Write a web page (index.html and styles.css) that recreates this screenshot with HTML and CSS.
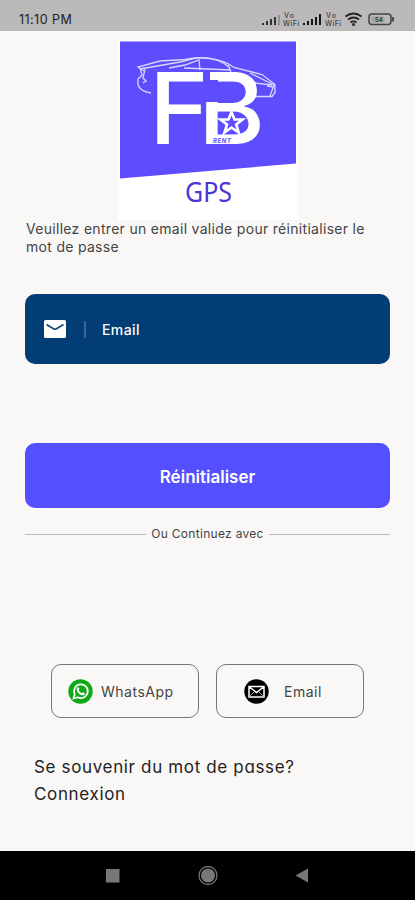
FILE: index.html
```
<!DOCTYPE html>
<html lang="fr">
<head>
    <meta charset="UTF-8">
    <meta name="viewport" content="width=device-width, initial-scale=1">
    <title>Réinitialiser le mot de passe</title>
    <link rel="stylesheet" href="styles.css">
</head>
<body>
    <header class="status-bar">
        <span class="time">11:10 PM</span>
        <svg class="status-icons" width="136" height="20" viewBox="260 9 136 20">
            <g stroke="#333" stroke-width="2">
                <path d="M263 25v-2M267 25v-4M271 25v-6M275 25v-8"/>
                <path d="M279 25v-10" stroke="#929090"/>
                <path d="M304 25v-2M308 25v-4M312 25v-6M316 25v-8M320 25v-11" stroke="#151515"/>
            </g>
            <g class="vowifi">
                <text x="284" y="17.5" textLength="10">Vo</text>
                <text x="283" y="26" textLength="16">WiFi</text>
                <text x="326" y="17.5" textLength="10">Vo</text>
                <text x="325" y="26" textLength="16">WiFi</text>
            </g>
            <g fill="none" stroke="#222" stroke-width="1.8">
                <path d="M345.500 16.500q8-6 16 0M348 19.500q5.500-4 11 0M350.500 22.500q3-2.300 6 0"/>
                <circle cx="353.500" cy="24.500" r=".6"/>
                <rect x="369" y="14" width="22" height="10.500" rx="3" stroke="#444" stroke-width="1.500"/>
                <path d="M393 17v4.500" stroke="#444"/>
            </g>
            <rect x="371.500" y="16.500" width="13" height="6" rx="1" fill="#a5a3a3"/>
            <text class="battery" x="375" y="22">54</text>
        </svg>
    </header>

    <main class="screen">
        <svg class="logo" width="180" height="180" viewBox="118 40 180 180">
            <path d="M118 40h180v180H118z" fill="#fff"/>
            <path d="M120 41.500h176v122L120 178.500z" fill="#5d4dff"/>
            <g class="car">
                <path d="M144 71l-6-4 22-6 25-1.500c18-4 37-1 49 8l28 7 13 10v8l-3 4h-17V83l17 2"/>
                <path d="M140 68l2 7-4 4c-1 8 2 12 13 14M145 69l-2 9 3 3-3 2"/>
                <path d="M140 69l40-7 16-4c14-1 26 2 34 10M169 68l16-3 14-5 1 10M184 68l47 2M228 65l3 7M250 73l24 12-4 11M256 83l-3-2M267 86l7 1"/>
            </g>
            <text class="letters" x="149" y="144" textLength="61" lengthAdjust="spacingAndGlyphs">F</text>
            <text class="letters" x="198" y="144" textLength="67" lengthAdjust="spacingAndGlyphs">B</text>
            <path d="M203 70h7v10h8v22h-15z" fill="#5d4dff"/>
            <path d="M231.500 112l3 7.500h8l-6.300 5 2.500 8-7.200-5-7 5 2.500-8-6.500-5h8z" class="star"/>
            <text class="rent" x="213" y="142.500" textLength="18">RENT</text>
            <text class="gps" x="185" y="202" textLength="47" lengthAdjust="spacingAndGlyphs">GPS</text>
        </svg>

        <p class="intro">Veuillez entrer un email valide pour réinitialiser le mot de passe</p>

        <div class="field">
            <svg width="22" height="18" viewBox="0 0 22 18">
                <rect width="22" height="18" rx="1.500" fill="#fff"/>
                <path d="M2.500 4.500l7 4.200q1.500.8 3 0l7-4.200" fill="none" stroke="#174578" stroke-width="1.600"/>
            </svg>
            <span class="separator"></span>
            <span class="field-label">Email</span>
        </div>

        <button class="reset">Réinitialiser</button>

        <div class="divider"><span>Ou Continuez avec</span></div>

        <div class="contacts">
            <button class="contact whatsapp">
                <svg width="25" height="25" viewBox="0 0 25 25">
                    <circle cx="12.500" cy="12.500" r="12.200" fill="#10a916"/>
                    <path d="M5.500 19.500l1.200-4.200A6.900 6.900 0 1 1 9.600 18.300z" fill="none" stroke="#fff" stroke-width="1.700"/>
                    <path d="M9.300 8.800c1-1 1.500-.3 2.100 1.300.1.500-.4.900-.7 1.200.8 1.500 1.800 2.400 3.200 3 .5-.6.9-1.200 1.500-.8 1.500.7 1.800.9 1.300 1.900-.8 1.300-2.700 1.200-4.600.1-2.300-1.300-4.800-4.800-2.800-6.700z" fill="#fff"/>
                </svg>
                <span>WhatsApp</span>
            </button>
            <button class="contact mail">
                <svg width="25" height="25" viewBox="0 0 25 25">
                    <circle cx="12.500" cy="12.500" r="12.200"/>
                    <path d="M5 7.500h15v10.500H5zM5.500 8l7 5.500 7-5.500" fill="none" stroke="#fff" stroke-width="1.500"/>
                    <path d="M5.500 17.500l4.500-4.500M19.500 17.500l-4.500-4.500" stroke="#999"/>
                </svg>
                <span>Email</span>
            </button>
        </div>

        <div class="remember">
            <div class="question">Se souvenir du mot de passe?</div>
            <div class="login">Connexion</div>
        </div>
    </main>

    <nav class="nav-bar">
        <svg width="415" height="49" viewBox="0 0 415 49" fill="#777">
            <path d="M106 18h13.500v13.500H106zM308 17.500v14L295.500 24.500z"/>
            <circle cx="208" cy="24.500" r="7"/>
            <circle cx="208" cy="24.500" r="9" fill="none" stroke="#777" stroke-width="1.300"/>
        </svg>
    </nav>
</body>
</html>
```
FILE: styles.css
```
* {
    box-sizing: border-box;
}

body {
    margin: 0;
    height: 900px;
    display: flex;
    flex-direction: column;
    background-color: #f9f8f6;
    font-family: Inter, Roboto, sans-serif;
    color: #444;
    overflow: hidden;
}

.status-bar {
    height: 31px;
    padding: 9px 19px 0;
    display: flex;
    justify-content: space-between;
    background-color: #bbb9b9;
}

.time {
    font: 400 12.5px/21px Inter, sans-serif;
    letter-spacing: 0.45px;
    color: #222;
}

.vowifi {
    font: 500 7px Inter, sans-serif;
    fill: #444;
}

.battery {
    font: 600 6px Inter, sans-serif;
    fill: #333;
}

.screen {
    flex: 1;
    padding: 9px 25px 0;
    display: flex;
    flex-direction: column;
}

.logo {
    align-self: center;
    margin-left: 1px;
}

.car {
    fill: none;
    stroke: #d9d5ff;
    stroke-width: 1.3;
}

.letters {
    font: 500 99px Inter, sans-serif;
    fill: #fff;
}

.star {
    fill: #5d4dff;
    stroke: #fff;
    stroke-width: 2.6;
}

.rent {
    font: italic 700 6px Inter, sans-serif;
    fill: #5d4dff;
}

.gps {
    font: 400 27px "Noto Sans", sans-serif;
    fill: #4c35d5;
}

.intro {
    margin: 0 0 38px 1px;
    font-size: 14px;
    line-height: 18px;
    letter-spacing: 0.3px;
}

.field {
    height: 70px;
    padding-left: 19px;
    display: flex;
    align-items: center;
    border-radius: 10px;
    background-color: #033d76;
    color: #fff;
}

.separator {
    width: 2px;
    height: 17px;
    margin: 0 16px 0 18px;
    background-color: #3d6591;
}

.field-label {
    padding-top: 1px;
    font-size: 14px;
    font-weight: 500;
    letter-spacing: 0.4px;
}

.reset {
    height: 65px;
    margin-top: 79px;
    padding: 2px 0 0;
    border: none;
    border-radius: 10px;
    background-color: #5450ff;
    color: #fff;
    font: 600 17px Inter, sans-serif;
}

.divider {
    height: 18px;
    margin-top: 17px;
    display: flex;
    align-items: center;
    gap: 5px;
    font-size: 12px;
    letter-spacing: 0.3px;
}

.divider span {
    padding-bottom: 1px;
}

.divider::before,
.divider::after {
    content: "";
    flex: 1;
    height: 1px;
    background-color: #bdbcba;
}

.contacts {
    margin: 121px 0 0 26px;
    display: flex;
    gap: 17px;
}

.contact {
    width: 148px;
    height: 54px;
    padding: 0 0 0 16px;
    display: flex;
    align-items: center;
    gap: 8px;
    border: 1px solid #777;
    border-radius: 10px;
    background: none;
    color: #444;
    font: 400 14px Inter, sans-serif;
    letter-spacing: 0.5px;
}

.mail {
    padding-left: 27px;
    gap: 15px;
}

.remember {
    margin: 36px 0 0 9px;
    font: 400 17px/27px Inter, sans-serif;
    font-feature-settings: "cv11";
    letter-spacing: 0.65px;
    color: #222;
}

.nav-bar {
    height: 49px;
    background-color: #000;
}
```
